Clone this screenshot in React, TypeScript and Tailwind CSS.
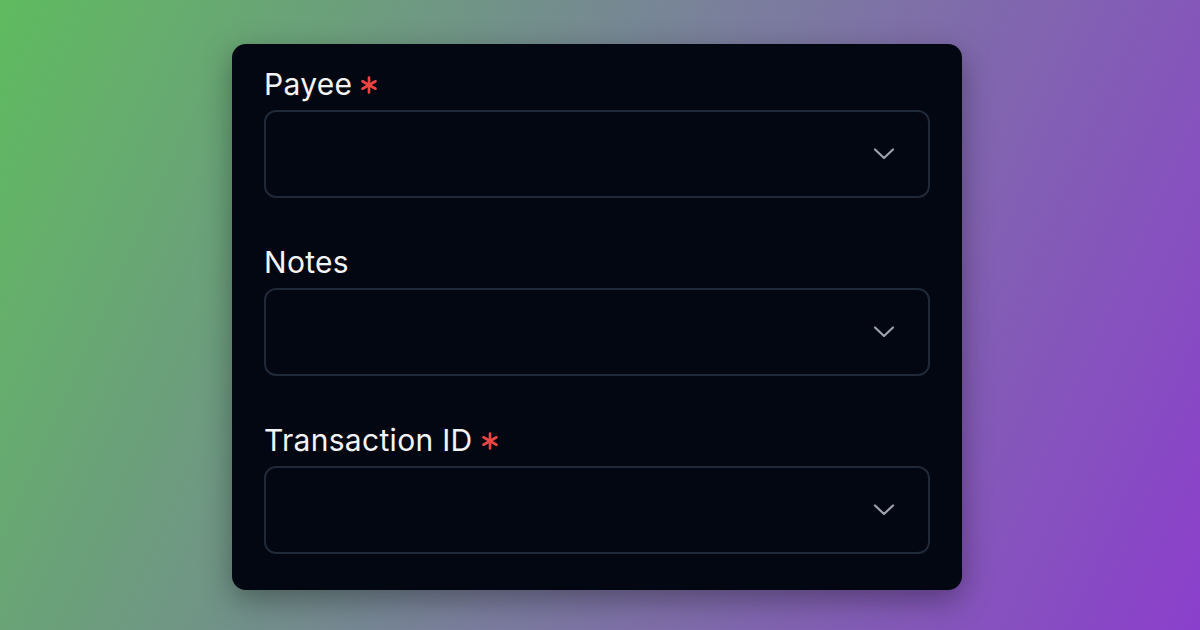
import React from "react";

function Chevron() {
  return (
    <svg width="24" height="14" viewBox="0 0 24 14" fill="none" stroke="#9ca3af" strokeWidth="2.2" strokeLinecap="round" strokeLinejoin="round">
      <path d="M3 2.5 L12 11 L21 2.5" />
    </svg>
  );
}

function Asterisk() {
  return (
    <svg width="18" height="18" viewBox="0 0 18 18" fill="none" stroke="#ef4444" strokeWidth="2.6" strokeLinecap="round" className="ml-[8px] mt-[2px]">
      <line x1="9" y1="1.5" x2="9" y2="16.5" />
      <line x1="2.5" y1="5.25" x2="15.5" y2="12.75" />
      <line x1="2.5" y1="12.75" x2="15.5" y2="5.25" />
    </svg>
  );
}

function Field({ label, required }: { label: string; required?: boolean }) {
  return (
    <div className="flex flex-col gap-[10px]">
      <div className="h-[36px] flex items-center text-[30px] leading-[36px] text-gray-100 font-normal tracking-[0.3px] pt-[4px]">
        <span>{label}</span>
        {required && <Asterisk />}
      </div>
      <div className="h-[88px] rounded-[12px] border-2 border-[#1f2937] flex items-center justify-end pr-[32px]">
        <Chevron />
      </div>
    </div>
  );
}

export default function App() {
  return (
    <div
      className="w-[1200px] h-[630px] flex items-start justify-start pl-[232px] pt-[44px] bg-[linear-gradient(114deg,#5fbb5f_0%,#7a7f9c_50%,#8b3fcc_100%)]"
      style={{ fontFamily: "Inter, 'Noto Sans', sans-serif" }}
    >
      <div className="w-[730px] h-[546px] rounded-[14px] bg-[#030712] px-[32px] pt-[20px] shadow-[0_10px_30px_rgba(0,0,0,0.35)] flex flex-col gap-[44px]">
        <Field label="Payee" required />
        <Field label="Notes" />
        <Field label="Transaction ID" required />
      </div>
    </div>
  );
}
